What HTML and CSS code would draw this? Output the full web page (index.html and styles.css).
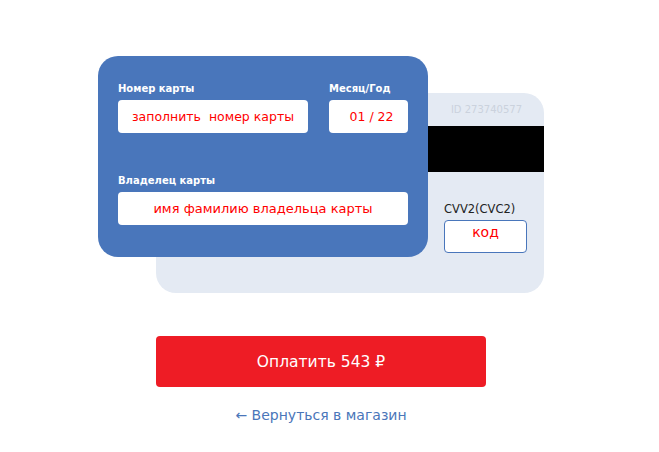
FILE: index.html
```html
<!DOCTYPE html>
<html lang="ru">
<head>
    <meta charset="UTF-8">
    <meta name="viewport" content="width=device-width, initial-scale=1.0">
    <title>Оплата картой</title>
    <link rel="stylesheet" href="styles.css">
</head>
<body>
    <!-- Форма оплаты -->
    <div class="page">
        <div class="cards">
            <!-- Лицевая сторона карты -->
            <div class="card-front">
                <div class="row">
                    <div class="field field-number">
                        <label class="label">Номер карты</label>
                        <input class="input" type="text" value="заполнить  номер карты">
                    </div>
                    <div class="field field-date">
                        <label class="label">Месяц/Год</label>
                        <input class="input input-date" type="text" value="01 / 22">
                    </div>
                </div>
                <div class="field field-owner">
                    <label class="label">Владелец карты</label>
                    <input class="input input-owner" type="text" value="имя фамилию владельца карты">
                </div>
            </div>
            <!-- Обратная сторона карты -->
            <div class="card-back">
                <div class="card-id">ID 273740577</div>
                <div class="stripe"></div>
                <div class="cvv">
                    <label class="cvv-label">CVV2(CVC2)</label>
                    <input class="cvv-input" type="text" value="код">
                </div>
            </div>
        </div>
        <button class="pay">Оплатить 543 ₽</button>
        <a class="back-link" href="#">← Вернуться в магазин</a>
    </div>
</body>
</html>
```

FILE: styles.css
```css
body {
    margin: 0;
    background: #fff;
    font-family: "DejaVu Sans", Verdana, sans-serif;
}
/* Колонка по центру */
.page {
    width: 642px;
    padding-top: 56px;
    display: flex;
    flex-direction: column;
    align-items: center;
}
/* Обе стороны карты лежат в одной ячейке */
.cards {
    display: grid;
    width: 446px;
}
.card-front,
.card-back {
    grid-area: 1 / 1;
    box-sizing: border-box;
}
.card-front {
    z-index: 1;
    width: 330px;
    height: 201px;
    padding: 26px 20px 0;
    background: #4976bb;
    border-radius: 20px;
}
.row {
    display: flex;
    gap: 21px;
    margin-bottom: 41px;
}
.field-number {
    width: 190px;
}
.field-date {
    width: 79px;
}
.label {
    display: block;
    margin-bottom: 4px;
    font-size: 10px;
    line-height: 14px;
    font-weight: bold;
    color: #fff;
}
.input {
    display: block;
    width: 100%;
    height: 33px;
    box-sizing: border-box;
    border: none;
    border-radius: 4px;
    background: #fff;
    font-family: inherit;
    font-size: 12.5px;
    color: #f00;
    text-align: center;
    outline: none;
}
.input-date {
    padding-left: 8px;
}
.input-owner {
    font-size: 13px;
}
.card-back {
    margin: 37px 0 0 58px;
    width: 388px;
    height: 200px;
    background: #e4eaf3;
    border-radius: 20px;
    display: flex;
    flex-direction: column;
}
.card-id {
    height: 33px;
    padding-right: 22px;
    display: flex;
    align-items: center;
    justify-content: flex-end;
    font-size: 10px;
    color: #cbd2dd;
}
.stripe {
    height: 46px;
    background: #000;
}
.cvv {
    align-self: flex-end;
    width: 83px;
    margin: 30px 17px 0 0;
}
.cvv-label {
    display: block;
    margin-bottom: 4px;
    font-size: 11.5px;
    line-height: 14px;
    color: #222;
    white-space: nowrap;
}
.cvv-input {
    display: block;
    width: 100%;
    height: 33px;
    box-sizing: border-box;
    padding-bottom: 10px;
    border: 1px solid #4976bb;
    border-radius: 4px;
    background: #fff;
    font-family: inherit;
    font-size: 14px;
    color: #f00;
    text-align: center;
    outline: none;
}
/* Кнопка оплаты */
.pay {
    margin-top: 43px;
    width: 330px;
    height: 51px;
    border: none;
    border-radius: 4px;
    background: #ee1c25;
    color: #fff;
    font-family: inherit;
    font-size: 15.5px;
    cursor: pointer;
}
.back-link {
    margin-top: 19px;
    font-size: 14px;
    line-height: 18px;
    color: #4a76b9;
    text-decoration: none;
}
```
